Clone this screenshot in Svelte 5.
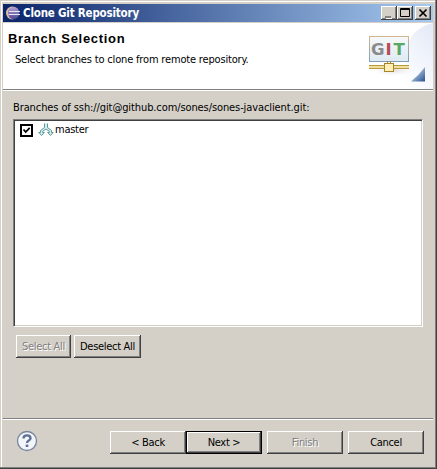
<script>
  const nav = [
    { label: '< Back', kind: '' },
    { label: 'Next >', kind: 'default' },
    { label: 'Finish', kind: 'disabled' },
    { label: 'Cancel', kind: '' }
  ];
</script>

<div class="window">
  <header class="titlebar">
    <svg class="eclipse" width="15" height="14" viewBox="0 0 15 14">
      <defs>
        <linearGradient id="ecl" x1="0" y1="0" x2="0" y2="1">
          <stop offset="0" stop-color="#b5a4d4" /><stop offset="1" stop-color="#4b4690" />
        </linearGradient>
      </defs>
      <ellipse cx="6" cy="7" rx="6" ry="6.5" fill="#e0b9a0" />
      <ellipse cx="7.600" cy="7" rx="5.600" ry="6.200" fill="url(#ecl)" />
      <path d="M3 5.500H14M2.500 8.500H14" stroke="#e8e6f6" stroke-width="1.200" />
    </svg>
    <span class="title">Clone Git Repository</span>
    <div class="controls">
      <button class="ctl" aria-label="Minimize"><svg width="14" height="12"><path d="M3 9h6v2H3z" fill="#85827d" /><path d="M4 11.500h6" stroke="#fff" /></svg></button>
      <button class="ctl" aria-label="Maximize"><svg width="14" height="12"><path d="M2.500 1.500h9v8h-9zM2 2.500h10" fill="none" stroke="#000" /></svg></button>
      <button class="ctl close" aria-label="Close"><svg width="14" height="12"><path d="M3.500 2.500l7 7M10.500 2.500l-7 7" stroke="#000" stroke-width="1.700" /></svg></button>
    </div>
  </header>

  <section class="banner">
    <div class="words">
      <h1>Branch Selection</h1>
      <p>Select branches to clone from remote repository.</p>
    </div>
    <svg class="art" width="75" height="66" viewBox="358 23 75 66">
      <defs>
        <linearGradient id="wash" x1="0" y1="1" x2="1" y2="0">
          <stop offset="0.300" stop-color="#fff" /><stop offset="1" stop-color="#e2e9f7" />
        </linearGradient>
        <linearGradient id="sheet" x1="0" y1="0" x2="0" y2="1">
          <stop offset="0" stop-color="#f6f9fa" /><stop offset="1" stop-color="#dfeaf2" />
        </linearGradient>
        <linearGradient id="frame" x1="0" y1="0" x2="0" y2="1">
          <stop offset="0" stop-color="#d2b78e" /><stop offset="1" stop-color="#7f9dba" />
        </linearGradient>
        <linearGradient id="tri" x1="0" y1="0" x2="1" y2="1">
          <stop offset="0.300" stop-color="#b7cbe5" /><stop offset="1" stop-color="#244f8d" />
        </linearGradient>
        <radialGradient id="shade"><stop offset="0" stop-color="#dcd9d9" /><stop offset="1" stop-color="#fff" stop-opacity="0" /></radialGradient>
      </defs>
      <path d="M433 23V89H372Q414 78 408 43Q415 27 433 23Z" fill="url(#wash)" />
      <ellipse cx="393" cy="70" rx="24" ry="7" fill="url(#shade)" />
      <rect x="369.500" y="36.500" width="39" height="25" fill="url(#sheet)" stroke="url(#frame)" />
      <g class="git"><text x="371" y="55" fill="#8b8b8b">G</text><text x="385.500" y="55" fill="#b94b55">I</text><text x="393.500" y="55" fill="#57a866">T</text></g>
      <path d="M369 65.500h40M369 68.500h40" stroke="#b69b3f" /><path d="M369 67h40" stroke="#f1dda0" stroke-width="2" />
      <path d="M387.500 61v3M390.500 61v3" stroke="#a4863b" />
      <rect x="384.500" y="63.500" width="9" height="8" fill="#fff0b9" stroke="#a78425" />
      <path d="M425 67V81.500H411Q419 75 425 67Z" fill="url(#tri)" />
    </svg>
  </section>

  <main>
    <div class="caption">Branches of ssh://git@github.com/sones/sones-javaclient.git:</div>
    <div class="list">
      <div class="item">
        <svg width="13" height="13"><rect x="1" y="1" width="11" height="11" fill="#fff" stroke="#000" stroke-width="2" /><path d="M3.500 5.500l2.200 2.500l4-4.200" fill="none" stroke="#000" stroke-width="1.800" /></svg>
        <svg class="branch" width="16" height="14" viewBox="0 0 16 14"><path d="M6.500 .5V4.500L2.500 7.500V9.500H.8L3.500 12.500L6.300 9.500H4.700V8.300L8 6L11.300 8.300V9.500H9.700L12.500 12.500L15.200 9.500H13.500V7.500L9.500 4.500V.5" fill="#d5edea" stroke="#5c9b9c" /></svg>
        <span>master</span>
      </div>
    </div>
    <div class="selection">
      <button class="btn disabled sa"><span>Select All</span></button>
      <button class="btn da"><span>Deselect All</span></button>
    </div>
  </main>

  <footer>
    <svg class="help" width="22" height="22" viewBox="0 0 22 22"><circle cx="11" cy="11" r="9.500" fill="#f2f5f9" stroke="#77869f" stroke-width="1.300" /><path d="M7.500 8.500Q7.500 5.400 11 5.400Q14.500 5.400 14.500 8.200Q14.500 9.800 12.500 10.800Q11 11.600 11 13" fill="none" stroke="#5e7194" stroke-width="2.400" /><rect x="9.700" y="14.600" width="2.600" height="2.400" fill="#5e7194" /></svg>
    <div class="nav">
      {#each nav as b}
        <button class="btn {b.kind}"><span>{b.label}</span></button>
      {/each}
    </div>
  </footer>
</div>

<style>
  :global(body) { margin: 0; background: #d4d0c8; }
  * { box-sizing: border-box; }
  .window {
    width: 437px; height: 469px; padding: 4px 4px 2px 3px; display: flex; flex-direction: column;
    background: #d4d0c8; color: #000; overflow: hidden;
    font: 11px/14px "DejaVu Sans Condensed", "DejaVu Sans", sans-serif; font-stretch: condensed;
    box-shadow: inset -1px -1px #404040, inset -2px -2px #808080, inset 1px 1px #d4d0c8, inset 2px 2px #fff;
    white-space: nowrap;
  }
  .titlebar {
    height: 18px; flex: none; display: flex; align-items: center; padding: 0 2px 0 3px;
    background: linear-gradient(90deg, #0a246a, #a6caf0); color: #fff;
  }
  .title { font-size: 11.5px; font-weight: bold; margin-left: 2px; letter-spacing: -0.2px; }
  .controls { margin-left: auto; display: flex; }
  .ctl {
    width: 16px; height: 14px; padding: 0; border: 0; background: #d4d0c8; display: flex;
    box-shadow: inset -1px -1px #404040, inset 1px 1px #fff, inset -2px -2px #808080;
  }
  .ctl svg { display: block; margin: 1px; }
  .close { margin-left: 2px; }
  .banner { height: 67px; flex: none; margin-top: 1px; background: #fff; border-bottom: 1px solid #808080; display: flex; justify-content: space-between; }
  .words { padding: 8px 0 0 5px; }
  h1 { margin: 0; font: bold 13px/15px "Liberation Sans", sans-serif; letter-spacing: 0.7px; }
  p { margin: 7px 0 0 7px; letter-spacing: -0.17px; }
  .art { display: block; }
  .git { font: bold 16.5px "DejaVu Sans", sans-serif; }
  main { flex: 1; padding: 10px 10px 0; border-top: 1px solid #fff; }
  .caption { height: 18px; letter-spacing: -0.1px; }
  .list { height: 208px; background: #fff; border: 1px solid; border-color: #808080 #fff #fff #808080; box-shadow: inset 1px 1px #404040, inset -1px -1px #d4d0c8; padding: 3px 0 0 6px; }
  .item { display: flex; align-items: center; height: 14px; letter-spacing: -0.25px; }
  .branch { margin: 0 1px 0 5px; }
  .selection { display: flex; gap: 3px; padding: 8px 0 0 3px; }
  .btn {
    font: inherit; color: #000; background: #d4d0c8; height: 23px; width: 76px; padding: 0; border: 0; letter-spacing: -0.3px;
    display: flex; align-items: center; justify-content: center; white-space: nowrap;
    box-shadow: inset -1px -1px #404040, inset 1px 1px #fff, inset -2px -2px #808080;
  }
  .sa { width: 55px; }
  .da { width: 67px; }
  .disabled { color: #808080; text-shadow: 1px 1px #fff; }
  .default { box-shadow: inset 0 0 0 1px #000, inset -2px -2px #404040, inset 2px 2px #fff, inset -3px -3px #808080; }
  footer { height: 49px; flex: none; border-top: 1px solid #808080; box-shadow: inset 0 1px #fff; display: flex; justify-content: space-between; padding: 12px 9px 0 13px; }
  .help { margin-top: -1px; }
  .nav { display: flex; }
  .nav .btn:nth-child(n + 3) { margin-left: 5px; }
</style>
